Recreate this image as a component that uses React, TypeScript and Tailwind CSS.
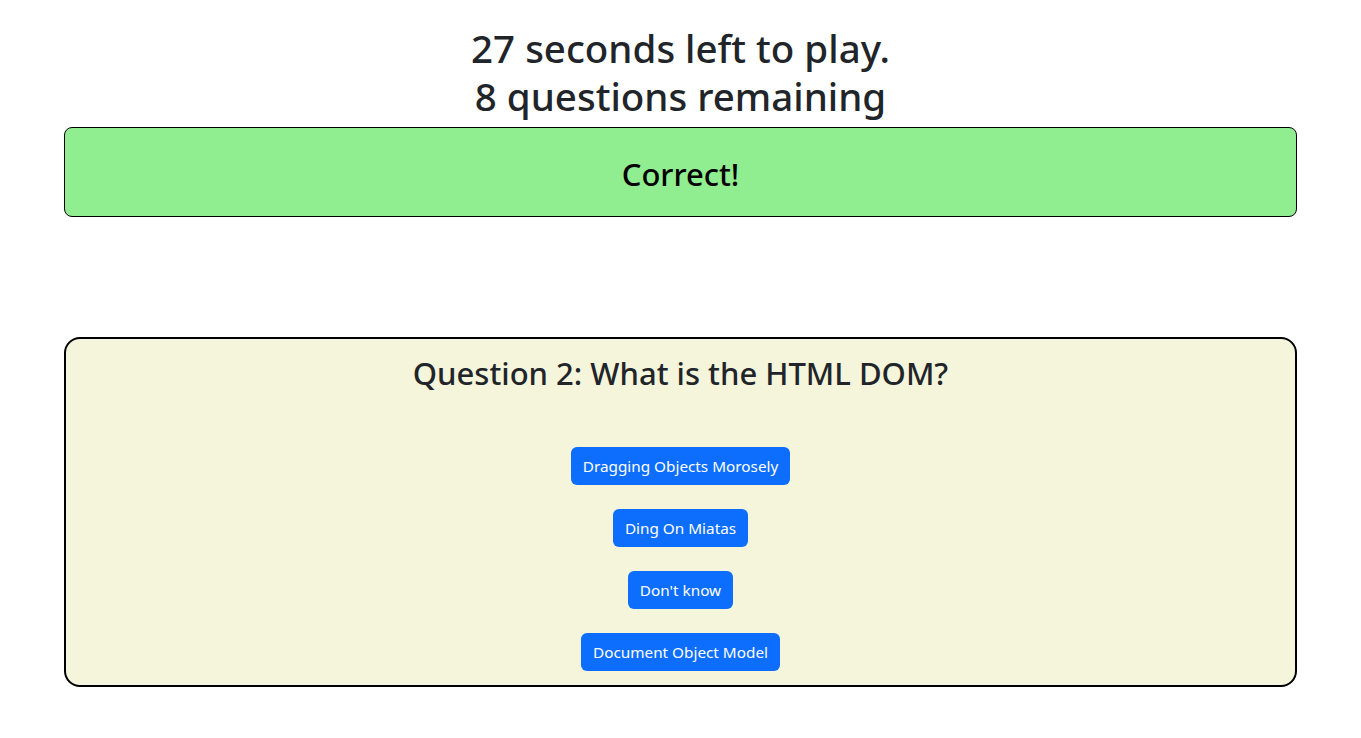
const answers = [
  'Dragging Objects Morosely',
  'Ding On Miatas',
  "Don't know",
  'Document Object Model',
];

export default function App() {
  return (
    <div className="min-h-screen bg-white font-['Noto_Sans',sans-serif] text-[#212529]">
      <div className="mx-16 pt-6">
        <h1 className="text-center text-[38.5px] font-medium leading-[48px]">
          <div>27 seconds left to play.</div>
          <div>8 questions remaining</div>
        </h1>

        <div className="mt-[7px] flex h-[90px] items-center justify-center rounded-lg border border-black bg-[#90ee90] pt-[3px]">
          <h2 className="text-[31px] font-medium leading-[38px] text-black">Correct!</h2>
        </div>

        <div className="mt-[120px] rounded-2xl border-2 border-black bg-[#f5f5dc] pt-[15px] pb-[14px]">
          <h2 className="text-center text-[31px] font-medium leading-[38px]">
            Question 2: What is the HTML DOM?
          </h2>
          <div className="mt-[55px] flex flex-col items-center gap-6">
            {answers.map((a) => (
              <button
                key={a}
                className="h-[38px] rounded-md bg-[#0d6efd] px-3 text-[15.3px] leading-6 text-white"
              >
                {a}
              </button>
            ))}
          </div>
        </div>
      </div>
    </div>
  );
}
